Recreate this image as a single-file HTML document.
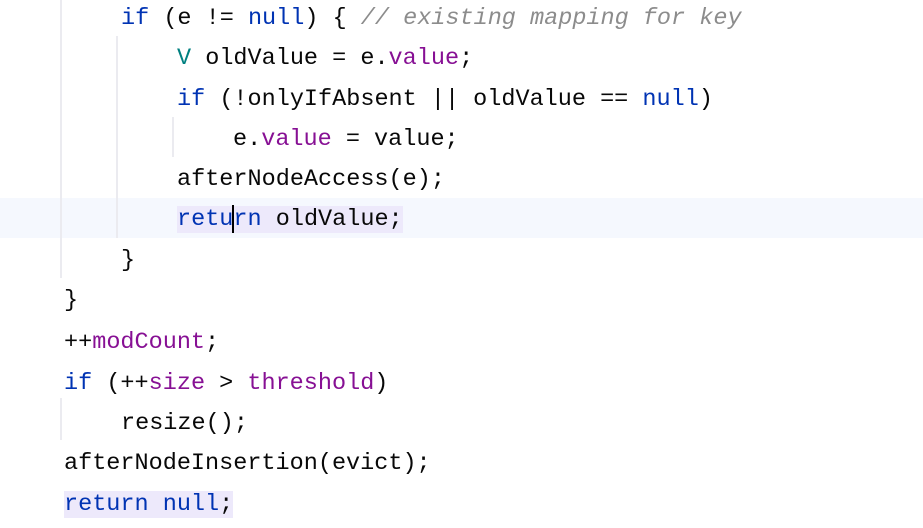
<!DOCTYPE html>
<html><head><meta charset="utf-8"><style>
html,body{margin:0;padding:0;background:#fff;width:923px;height:528px;overflow:hidden}
.c{position:absolute;left:0;top:-1px;width:923px;font-family:"Liberation Mono",monospace;font-size:23.5px;color:#080808}
.l{height:40.3px;line-height:40.3px;white-space:pre;position:relative}
.k{color:#0033b3}.f{color:#871094}.cm{color:#8c8c8c;font-style:italic}.t{color:#008080}
.g{position:absolute;width:2px;background:#ebebf0}
.hl{background:#ede9fb}
</style></head><body>
<div style="position:absolute;left:0;top:198px;width:923px;height:40px;background:#f5f8fe"></div>
<div class="g" style="left:60px;top:0;height:278px"></div>
<div class="g" style="left:116px;top:36px;height:202px"></div>
<div class="g" style="left:172px;top:117px;height:40px"></div>
<div class="g" style="left:60px;top:398px;height:42px"></div>
<div class="c">
<div class="l" style="padding-left:121px"><span class="k">if</span> (e != <span class="k">null</span>) { <span class="cm">// existing mapping for key</span></div>
<div class="l" style="padding-left:177px"><span class="t">V</span> oldValue = e.<span class="f">value</span>;</div>
<div class="l" style="padding-left:177px"><span class="k">if</span> (!onlyIfAbsent || oldValue == <span class="k">null</span>)</div>
<div class="l" style="padding-left:233px">e.<span class="f">value</span> = value;</div>
<div class="l" style="padding-left:177px">afterNodeAccess(e);</div>
<div class="l" style="padding-left:177px"><span class="hl"><span class="k">retu</span><span style="display:inline-block;width:0;border-left:2px solid #000;height:28px;vertical-align:middle;margin-left:-1px;margin-right:-1px"></span><span class="k">rn</span> oldValue;</span></div>
<div class="l" style="padding-left:121px">}</div>
<div class="l" style="padding-left:64px">}</div>
<div class="l" style="padding-left:64px;top:2px">++<span class="f">modCount</span>;</div>
<div class="l" style="padding-left:64px;top:2px"><span class="k">if</span> (++<span class="f">size</span> &gt; <span class="f">threshold</span>)</div>
<div class="l" style="padding-left:121px;top:2px">resize();</div>
<div class="l" style="padding-left:64px;top:2px">afterNodeInsertion(evict);</div>
<div class="l" style="padding-left:64px;top:2px"><span class="hl"><span class="k">return null</span>;</span></div>
</div>
</body></html>
